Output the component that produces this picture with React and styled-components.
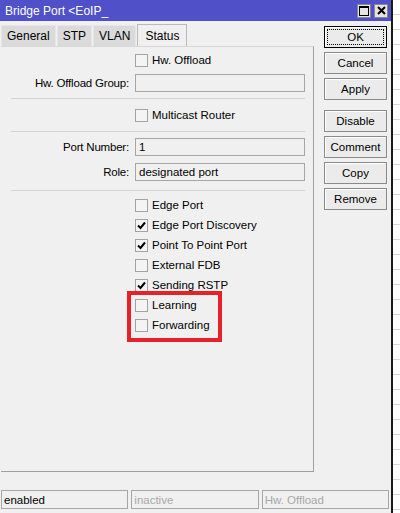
import styled, { createGlobalStyle } from "styled-components";

const GlobalStyle = createGlobalStyle`
  html, body {
    margin: 0;
    padding: 0;
    background: #ffffff;
  }
  body {
    font-family: "Liberation Sans", Arial, sans-serif;
    font-size: 11px;
    color: #000;
  }
`;

const checks = [
  { label: "Edge Port", checked: false },
  { label: "Edge Port Discovery", checked: true },
  { label: "Point To Point Port", checked: true },
  { label: "External FDB", checked: false },
  { label: "Sending RSTP", checked: true },
  { label: "Learning", checked: false },
  { label: "Forwarding", checked: false },
];

function CheckBox({ checked }) {
  return (
    <Box>
      {checked && (
        <svg width="9" height="9" viewBox="0 0 9 9">
          <path d="M1 4.5 L3.5 7 L8 1.5" stroke="#000" strokeWidth="2" fill="none" />
        </svg>
      )}
    </Box>
  );
}

function CheckRow({ label, checked, top }) {
  return (
    <Row top={top}>
      <Label />
      <CheckWrap>
        <CheckBox checked={checked} />
        <span>{label}</span>
      </CheckWrap>
    </Row>
  );
}

function App() {
  return (
    <>
      <GlobalStyle />
      <Page>
        <Window>
          <TitleBar>
            <span>Bridge Port &lt;EoIP_</span>
            <TitleButtons>
              <TitleButton>
                <svg width="10" height="10" viewBox="0 0 10 10">
                  <rect x="0.5" y="0.5" width="9" height="9" fill="none" stroke="#000" />
                  <rect x="0" y="0" width="10" height="2" fill="#000" />
                </svg>
              </TitleButton>
              <TitleButton>
                <svg width="9" height="9" viewBox="0 0 9 9">
                  <path d="M1 1 L8 8 M8 1 L1 8" stroke="#000" strokeWidth="2" />
                </svg>
              </TitleButton>
            </TitleButtons>
          </TitleBar>

          <Main>
            <LeftColumn>
              <Tabs>
                <Tab>General</Tab>
                <Tab>STP</Tab>
                <Tab>VLAN</Tab>
                <Tab active>Status</Tab>
              </Tabs>
              <Panel>
                <CheckRow label="Hw. Offload" checked={false} />
                <Row top={4}>
                  <Label>Hw. Offload Group:</Label>
                  <Field />
                </Row>
                <Separator top={6} />
                <CheckRow label="Multicast Router" checked={false} top={6} />
                <Separator top={6} />
                <Row top={6}>
                  <Label>Port Number:</Label>
                  <Field>1</Field>
                </Row>
                <Row top={7}>
                  <Label>Role:</Label>
                  <Field>designated port</Field>
                </Row>
                <Separator top={9} />
                <CheckList>
                  {checks.map((c) => (
                    <CheckRow key={c.label} label={c.label} checked={c.checked} />
                  ))}
                </CheckList>
                <Highlight />
              </Panel>
            </LeftColumn>

            <Buttons>
              <Button focused>OK</Button>
              <Button>Cancel</Button>
              <Button>Apply</Button>
              <Button gap>Disable</Button>
              <Button>Comment</Button>
              <Button>Copy</Button>
              <Button>Remove</Button>
            </Buttons>
          </Main>

          <StatusBar>
            <StatusCell>enabled</StatusCell>
            <StatusCell dim>inactive</StatusCell>
            <StatusCell dim>Hw. Offload</StatusCell>
          </StatusBar>
        </Window>
        <Backdrop />
      </Page>
    </>
  );
}

export default App;

const Page = styled.div`
  display: flex;
  width: 400px;
  height: 513px;
  overflow: hidden;
`;

const Window = styled.div`
  width: 393px;
  height: 513px;
  display: flex;
  flex-direction: column;
  background: #f0f0f0;
  border-right: 2px solid #1a1a1a;
  box-sizing: border-box;
`;

const Backdrop = styled.div`
  flex: 1;
  background: repeating-linear-gradient(
    to bottom,
    #ffffff 0,
    #ffffff 14px,
    #d6d6d6 14px,
    #d6d6d6 15px
  );
`;

const TitleBar = styled.div`
  height: 21px;
  flex: none;
  background: #5050c9;
  color: #fff;
  display: flex;
  align-items: center;
  justify-content: space-between;
  padding: 0 3px 0 5px;
  font-size: 12px;
`;

const TitleButtons = styled.div`
  display: flex;
  gap: 3px;
`;

const TitleButton = styled.div`
  width: 14px;
  height: 14px;
  background: #e4e4e4;
  border: 1px solid #888;
  box-sizing: border-box;
  display: flex;
  align-items: center;
  justify-content: center;
`;

const Main = styled.div`
  flex: 1;
  display: flex;
  padding-left: 1px;
`;

const LeftColumn = styled.div`
  width: 313px;
  display: flex;
  flex-direction: column;
  padding-bottom: 18px;
`;

const Tabs = styled.div`
  display: flex;
  align-items: flex-end;
  height: 24px;
  padding-top: 1px;
`;

const Tab = styled.div`
  height: ${(p) => (p.active ? 23 : 21)}px;
  padding: 0 ${(p) => (p.active ? 7 : 5)}px;
  margin-right: 1px;
  display: flex;
  align-items: center;
  font-size: 12px;
  background: ${(p) => (p.active ? "#f0f0f0" : "#dadada")};
  border: 1px solid ${(p) => (p.active ? "#b9b9b9" : "#e6e6e6")};
  border-bottom: none;
  box-sizing: border-box;
  margin-bottom: ${(p) => (p.active ? -1 : 0)}px;
  position: relative;
`;

const Panel = styled.div`
  flex: 1;
  position: relative;
  border: 1px solid #d8d8d8;
  border-right-color: #a0a0a0;
  border-bottom-color: #a0a0a0;
  border-left: none;
  padding: 3px 8px 0 0;
  display: flex;
  flex-direction: column;
`;

const Row = styled.div`
  display: grid;
  grid-template-columns: 128px 1fr;
  column-gap: 6px;
  align-items: center;
  margin-top: ${(p) => p.top || 0}px;
  min-height: 18px;
`;

const CheckList = styled.div`
  display: flex;
  flex-direction: column;
  margin-top: 4px;
`;

const Label = styled.div`
  text-align: right;
  font-size: 11.5px;
  letter-spacing: -0.2px;
`;

const CheckWrap = styled.label`
  display: flex;
  align-items: center;
  gap: 4px;
  height: 20px;
  font-size: 11.5px;
`;

const Box = styled.div`
  width: 13px;
  height: 13px;
  box-sizing: border-box;
  border: 1px solid #a3a3a3;
  background: #f4f4f4;
  display: flex;
  align-items: center;
  justify-content: center;
`;

const Field = styled.div`
  height: 18px;
  box-sizing: border-box;
  border: 1px solid #a6a6a6;
  background: #f0f0f0;
  padding: 0 3px;
  display: flex;
  align-items: center;
  font-size: 11.5px;
`;

const Separator = styled.div`
  height: 1px;
  background: #d4d4d4;
  margin: ${(p) => p.top || 0}px 0 0 10px;
`;

const Highlight = styled.div`
  position: absolute;
  left: 126px;
  top: 244px;
  width: 95px;
  height: 51px;
  border: 4px solid #e8202a;
  box-sizing: border-box;
`;

const Buttons = styled.div`
  display: flex;
  flex-direction: column;
  gap: 4px;
  padding-top: 5px;
  margin-left: 10px;
`;

const Button = styled.div`
  width: 63px;
  height: 22px;
  box-sizing: border-box;
  border: 1px solid ${(p) => (p.focused ? "#000" : "#8a8a8a")};
  background: #ebebeb;
  box-shadow: inset 1px 1px 0 #fff;
  display: flex;
  align-items: center;
  justify-content: center;
  font-size: 11.5px;
  margin-top: ${(p) => (p.gap ? 6 : 0)}px;
  outline: ${(p) => (p.focused ? "1px dotted #000" : "none")};
  outline-offset: -4px;
`;

const StatusBar = styled.div`
  display: flex;
  gap: 3px;
  padding: 0 2px 0 1px;
  height: 19px;
  margin-bottom: 4px;
`;

const StatusCell = styled.div`
  flex: 1;
  border: 1px solid #a6a6a6;
  box-sizing: border-box;
  display: flex;
  align-items: center;
  padding-left: 2px;
  font-size: 11.5px;
  color: ${(p) => (p.dim ? "#a8a8a8" : "#000")};
`;
